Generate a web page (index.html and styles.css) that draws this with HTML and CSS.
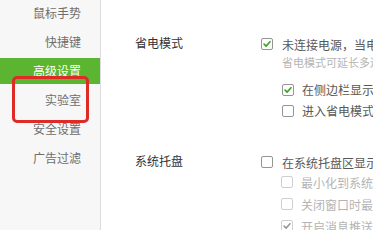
FILE: index.html
```html
<!DOCTYPE html>
<html lang="zh-CN">
<head>
<meta charset="utf-8">
<link rel="stylesheet" href="styles.css">
</head>
<body>
<div class="app">
  <nav class="sidebar">
    <div class="nav-item">鼠标手势</div>
    <div class="nav-item">快捷键</div>
    <div class="nav-item active">高级设置</div>
    <div class="nav-item">实验室</div>
    <div class="nav-item">安全设置</div>
    <div class="nav-item">广告过滤</div>
    <div class="highlight"></div>
  </nav>
  <main class="content">
    <section class="section s-power">
      <div class="title">省电模式</div>
      <div class="options">
        <label class="opt main"><span class="cb checked"><svg viewBox="0 0 11 11"><path d="M2.3 5.6 L4.5 7.8 L8.8 3" /></svg></span>未连接电源，当电量低于20%时自动进入省电模式</label>
        <div class="hint">省电模式可延长多达30%的续航时间</div>
        <div class="subs">
          <label class="opt sub"><span class="cb checked"><svg viewBox="0 0 11 11"><path d="M2.3 5.6 L4.5 7.8 L8.8 3" /></svg></span>在侧边栏显示电池图标</label>
          <label class="opt sub"><span class="cb"></span>进入省电模式时提醒我</label>
        </div>
      </div>
    </section>
    <section class="section s-tray">
      <div class="title">系统托盘</div>
      <div class="options">
        <label class="opt main"><span class="cb"></span>在系统托盘区显示图标</label>
        <div class="subs">
          <label class="opt sub disabled"><span class="cb"></span>最小化到系统托盘</label>
          <label class="opt sub disabled"><span class="cb"></span>关闭窗口时最小化到托盘</label>
          <label class="opt sub disabled"><span class="cb checked"><svg viewBox="0 0 11 11"><path d="M2.3 5.6 L4.5 7.8 L8.8 3" /></svg></span>开启消息推送功能</label>
        </div>
      </div>
    </section>
  </main>
</div>
</body>
</html>
```

FILE: styles.css
```css
html, body {
  margin: 0;
  padding: 0;
  background: #ffffff;
  overflow: hidden;
}
body {
  font-family: "Noto Sans CJK SC", "Noto Sans", sans-serif;
  font-size: 12px;
  color: #333;
}
.app {
  display: flex;
  width: 373px;
  height: 230px;
  overflow: hidden;
}
.sidebar {
  position: relative;
  width: 100px;
  flex: none;
  background: #f7f7f7;
  border-right: 1px solid #dcdcdc;
  display: flex;
  flex-direction: column;
  gap: 3px;
}
.nav-item {
  height: 26px;
  line-height: 26px;
  text-align: right;
  padding-right: 19px;
  color: #6e6e6e;
  white-space: nowrap;
}
.nav-item.active {
  background: #5cb531;
  color: #ffffff;
}
.highlight {
  position: absolute;
  left: 12px;
  top: 76px;
  width: 71px;
  height: 41px;
  border: 3px solid #df2b25;
  border-radius: 5px;
}
.content {
  flex: 1;
  min-width: 0;
  overflow: hidden;
  display: flex;
  flex-direction: column;
  padding-top: 34px;
  white-space: nowrap;
}
.section {
  display: flex;
}
.s-tray {
  margin-top: 31px;
}
.title {
  width: 126px;
  padding-left: 34px;
  flex: none;
  line-height: 16px;
  padding-top: 1px;
  color: #333;
}
.options {
  display: flex;
  flex-direction: column;
}
.opt {
  display: flex;
  align-items: center;
  color: #585858;
}
.opt.main {
  height: 20px;
}
.s-tray .opt.main {
  height: 18px;
  margin-top: 1px;
}
.opt .cb {
  width: 10px;
  height: 10px;
  border: 1px solid #959595;
  border-radius: 2px;
  background: #fff;
  margin-right: 9px;
  flex: none;
  display: flex;
}
.opt .cb svg {
  width: 10px;
  height: 10px;
}
.opt .cb svg path {
  fill: none;
  stroke: #3aa51f;
  stroke-width: 1.8;
  stroke-linecap: round;
  stroke-linejoin: round;
}
.hint {
  padding-left: 21px;
  height: 16px;
  line-height: 16px;
  font-size: 11px;
  color: #b4b4b4;
}
.subs {
  display: flex;
  flex-direction: column;
  padding-left: 21px;
  margin-top: 9px;
}
.s-tray .subs {
  margin-top: 0;
  padding-left: 20px;
}
.opt.sub {
  height: 21px;
}
.s-tray .opt.sub {
  height: 22px;
}
.opt.sub .cb {
  margin-right: 8px;
}
.opt.disabled {
  color: #b4b4b4;
}
.opt.disabled .cb {
  border-color: #cfcfcf;
}
.opt.disabled .cb svg path {
  stroke: #9a9a9a;
}
```
